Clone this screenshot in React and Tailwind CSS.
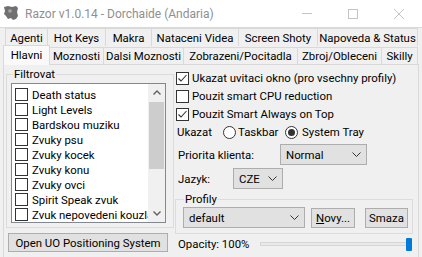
import React from "react";

const row1 = [
  ["Agenti", "w-[43px]"],
  ["Hot Keys", "w-[59px]"],
  ["Makra", "w-[47px]"],
  ["Nataceni Videa", "w-[88px]"],
  ["Screen Shoty", "w-[80px]"],
  ["Napoveda & Status", "w-[101px]"],
];

const row2 = [
  ["Moznosti", "w-[55px]"],
  ["Dalsi Moznosti", "w-[81px]"],
  ["Zobrazeni/Pocitadla", "w-[115px]"],
  ["Zbroj/Obleceni", "w-[85px]"],
  ["Skilly", "w-[37px]"],
];

const filters = [
  "Death status",
  "Light Levels",
  "Bardskou muziku",
  "Zvuky psu",
  "Zvuky kocek",
  "Zvuky konu",
  "Zvuky ovci",
  "Spirit Speak zvuk",
  "Zvuk nepovedeni kouzla",
];

const CheckBox = ({ checked }) => (
  <svg width="13" height="13" viewBox="0 0 13 13" className="shrink-0">
    <rect x="0.5" y="0.5" width="12" height="12" fill="#fff" stroke="#333" />
    {checked && (
      <polyline points="2.5,6.5 5,9 10.5,3" fill="none" stroke="#333" strokeWidth="1.1" />
    )}
  </svg>
);

const Radio = ({ checked }) => (
  <svg width="13" height="13" viewBox="0 0 13 13" className="shrink-0">
    <circle cx="6.5" cy="6.5" r="6" fill="#fff" stroke="#333" />
    {checked && <circle cx="6.5" cy="6.5" r="3.5" fill="#333" />}
  </svg>
);

const Chevron = () => (
  <svg width="9" height="6" viewBox="0 0 9 6" className="shrink-0">
    <polyline points="0.5,0.5 4.5,4.5 8.5,0.5" fill="none" stroke="#333" />
  </svg>
);

const Combo = ({ value, className }) => (
  <div
    className={
      "flex h-[21px] items-center justify-between border border-[#adadad] bg-[#e1e1e1] pl-[5px] pr-[5px] " +
      className
    }
  >
    <span>{value}</span>
    <Chevron />
  </div>
);

const App = () => {
  return (
    <div className="h-[257px] w-[422px] overflow-hidden whitespace-nowrap bg-[#f0f0f0] font-['Roboto',sans-serif] text-[11.4px] leading-[14px] text-black">
      {/* title bar */}
      <div className="flex h-[28px] items-center border-b border-[#dadada] bg-white">
        <svg width="16" height="16" viewBox="0 0 16 16" className="ml-[3px] mt-[-1px]">
          <path
            d="M1 2 L5 1 L9 2 L13 1 L15 3 L14 7 L15 11 L13 14 L10 15 L8 13 L5 14 L3 11 L1 9 L2 6 Z"
            fill="#707070"
          />
          <path d="M6 4 L9 5 L8 8 L5 7 Z" fill="#a5a5a5" />
        </svg>
        <span className="ml-[6px] text-[12px] text-[#8f8f8f]">Razor v1.0.14 - Dorchaide (Andaria)</span>
        <div className="ml-auto flex h-full">
          <div className="flex h-full w-[46px] items-center justify-center">
            <div className="h-px w-[10px] bg-[#c4c4c4]" />
          </div>
          <div className="flex h-full w-[46px] items-center justify-center">
            <div className="h-[10px] w-[10px] border border-[#c4c4c4]" />
          </div>
          <div className="flex h-full w-[46px] items-center justify-center">
            <svg width="10" height="10" viewBox="0 0 10 10">
              <path d="M0 0 L10 10 M10 0 L0 10" stroke="#c4c4c4" strokeWidth="1" />
            </svg>
          </div>
        </div>
      </div>

      {/* tabs, back row */}
      <div className="flex h-[18px] pl-[5px]">
        {row1.map(([t, w], i) => (
          <div
            key={t}
            className={
              "flex h-[18px] shrink-0 items-center justify-center border border-b-0 border-[#d9d9d9] bg-[#f0f0f0] " +
              w +
              (i > 0 ? " -ml-px" : "")
            }
          >
            {t}
          </div>
        ))}
      </div>

      {/* tabs, front row */}
      <div className="flex h-[18px] items-end pl-[3px]">
        <div className="relative z-10 mb-[-1px] flex h-[20px] w-[47px] shrink-0 items-center justify-center border border-b-0 border-[#d9d9d9] bg-[#f9f9f9] pb-[2px]">
          Hlavni
        </div>
        {row2.map(([t, w]) => (
          <div
            key={t}
            className={
              "-ml-px flex h-[17px] shrink-0 items-center justify-center border border-b-0 border-[#d9d9d9] bg-[#f0f0f0] " +
              w
            }
          >
            {t}
          </div>
        ))}
      </div>

      {/* tab page */}
      <div className="mx-[3px] flex h-[200px] border border-[#d9d9d9]">
        {/* left column */}
        <div className="flex w-[171px] shrink-0 flex-col">
          <fieldset className="ml-[2px] mt-[2px] w-[168px] border border-[#dcdcdc] pb-[4px] pl-[4px]">
            <legend className="ml-[2px] px-px leading-[14px]">Filtrovat</legend>
            <div className="mt-[2px] flex h-[140px] w-[155px] border border-[#828790] bg-white">
              <div className="flex min-w-0 flex-1 flex-col overflow-hidden pl-[3px] pt-[3px]">
                {filters.map((f) => (
                  <div key={f} className="flex h-[15px] shrink-0 items-center gap-[4px]">
                    <CheckBox />
                    <span>{f}</span>
                  </div>
                ))}
              </div>
              <div className="flex w-[17px] shrink-0 flex-col bg-[#f0f0f0]">
                <div className="flex h-[17px] items-center justify-center">
                  <svg width="8" height="5" viewBox="0 0 8 5">
                    <polyline points="0.5,4.5 4,1 7.5,4.5" fill="none" stroke="#606060" strokeWidth="1.4" />
                  </svg>
                </div>
                <div className="flex-1">
                  <div className="mx-px mt-px h-[67px] bg-[#cdcdcd]" />
                </div>
                <div className="flex h-[17px] items-center justify-center">
                  <svg width="8" height="5" viewBox="0 0 8 5">
                    <polyline points="0.5,0.5 4,4 7.5,0.5" fill="none" stroke="#606060" strokeWidth="1.4" />
                  </svg>
                </div>
              </div>
            </div>
          </fieldset>
          <div className="ml-[4px] mt-[5px] flex h-[19px] w-[160px] items-center justify-center border border-[#adadad] bg-[#e1e1e1]">
            Open UO Positioning System
          </div>
        </div>

        {/* right column */}
        <div className="flex flex-1 flex-col pt-[4px]">
          {[
            ["Ukazat uvitaci okno (pro vsechny profily)", true],
            ["Pouzit smart CPU reduction", false],
            ["Pouzit Smart Always on Top", true],
          ].map(([t, c]) => (
            <div key={t} className="ml-px flex h-[18px] items-center gap-[3px]">
              <CheckBox checked={c} />
              <span>{t}</span>
            </div>
          ))}

          <div className="ml-[2px] flex h-[18px] items-center">
            <span className="w-[46px]">Ukazat</span>
            <Radio />
            <span className="ml-[2px] w-[47px]">Taskbar</span>
            <Radio checked />
            <span className="ml-[4px]">System Tray</span>
          </div>

          <div className="ml-[3px] mt-[3px] flex items-center">
            <span className="w-[102px]">Priorita klienta:</span>
            <Combo value="Normal" className="w-[87px]" />
          </div>

          <div className="ml-[3px] mt-[3px] flex items-center">
            <span className="w-[55px]">Jazyk:</span>
            <Combo value="CZE" className="w-[50px]" />
          </div>

          <fieldset className="mt-[3px] w-[238px] border border-[#dcdcdc] pb-[5px] pl-[7px]">
            <legend className="ml-[1px] px-px leading-[14px]">Profily</legend>
            <div className="mt-px flex items-center">
              <Combo value="default" className="w-[122px]" />
              <div className="ml-[6px] flex h-[20px] w-[44px] items-center justify-center border border-[#adadad] bg-[#e1e1e1]">
                <span>
                  <span className="underline">N</span>ovy...
                </span>
              </div>
              <div className="ml-[10px] flex h-[20px] w-[43px] items-center justify-center border border-[#adadad] bg-[#e1e1e1]">
                Smaza
              </div>
            </div>
          </fieldset>

          <div className="ml-[3px] mt-px flex h-[18px] items-center">
            <span className="w-[82px]">Opacity: 100%</span>
            <div className="h-[4px] w-[151px] border border-[#d6d6d6] bg-[#e7eaea]" />
            <div className="-ml-[5px] h-[13px] w-[6px] rounded-[1px] bg-[#007ad9]" />
          </div>
        </div>
      </div>
    </div>
  );
};

export default App;
